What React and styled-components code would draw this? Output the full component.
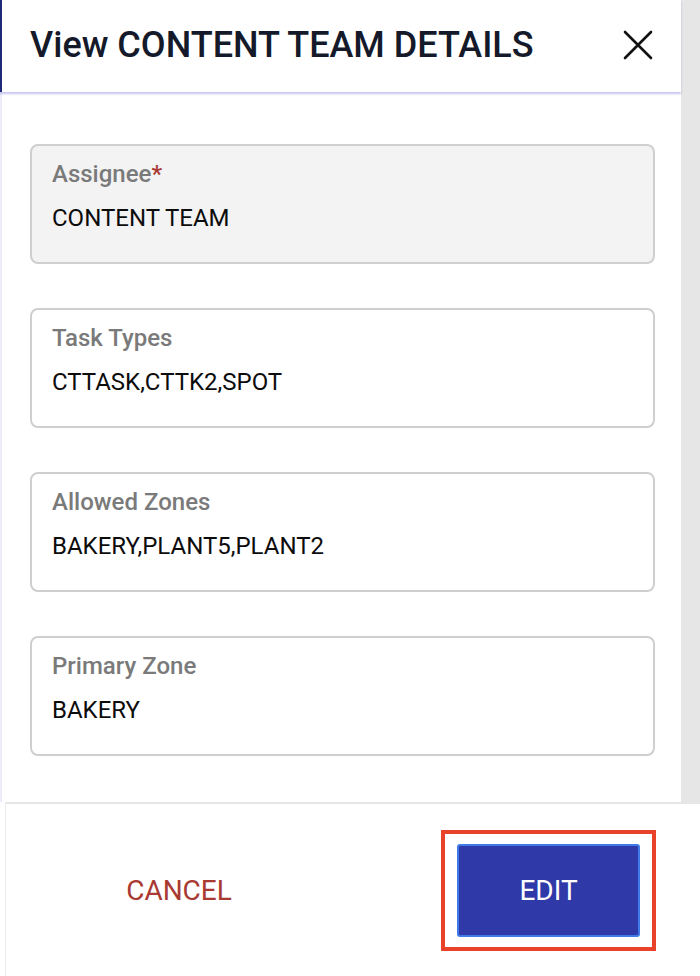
import React from 'react';
import styled, { createGlobalStyle } from 'styled-components';

const GlobalStyle = createGlobalStyle`
  html, body {
    margin: 0;
    padding: 0;
    background: #ffffff;
    font-family: Roboto, 'Noto Sans', Arial, sans-serif;
  }
`;

const Page = styled.div`
  width: 700px;
  height: 976px;
  display: flex;
  flex-direction: column;
  overflow: hidden;
  background: #ffffff;
`;

const Top = styled.div`
  flex: 1;
  display: flex;
  min-height: 0;
`;

const Panel = styled.div`
  flex: 1;
  display: flex;
  flex-direction: column;
  border-left: 2px solid #ececfb;
`;

const Gutter = styled.div`
  width: 19px;
  background: #e6e6e6;
`;

const Header = styled.div`
  height: 92px;
  display: flex;
  align-items: center;
  justify-content: space-between;
  padding: 0 26px 2px 28px;
  margin-left: -2px;
  border-left: 2px solid #1f2a7a;
  box-shadow: 0 2px 2px rgba(90, 90, 210, 0.35);
  box-sizing: border-box;
  position: relative;
`;

const Title = styled.h1`
  margin: 0;
  font-size: 36px;
  font-weight: 500;
  color: #141a2a;
  letter-spacing: 0;
`;

const CloseButton = styled.button`
  border: none;
  background: none;
  padding: 0;
  width: 34px;
  height: 34px;
  display: flex;
  align-items: center;
  justify-content: center;
  cursor: pointer;
`;

const Body = styled.div`
  flex: 1;
  display: flex;
  flex-direction: column;
  gap: 44px;
  padding: 52px 26px 0 28px;
`;

const Field = styled.div`
  height: 120px;
  box-sizing: border-box;
  border: 2px solid #cfcfcf;
  border-radius: 8px;
  background: ${p => (p.$disabled ? '#f3f3f3' : '#ffffff')};
  padding: 14px 20px 0;
  display: flex;
  flex-direction: column;
  gap: 16px;
`;

const Label = styled.div`
  font-size: 24px;
  font-weight: 500;
  color: #7a7a7a;
  line-height: 28px;
`;

const Required = styled.span`
  color: #a83a33;
`;

const Value = styled.div`
  font-size: 24px;
  color: #0c0c0c;
  line-height: 28px;
`;

const Footer = styled.div`
  height: 174px;
  margin-left: 5px;
  border-top: 2px solid #e6e6e6;
  border-left: 1px solid #ededed;
  display: flex;
  align-items: center;
  justify-content: space-between;
  padding: 0 44px 0 58px;
  box-sizing: border-box;
`;

const CancelButton = styled.button`
  border: none;
  background: none;
  width: 230px;
  height: 60px;
  font-family: Roboto, 'Noto Sans', Arial, sans-serif;
  font-size: 28px;
  color: #a83a33;
  cursor: pointer;
`;

const Highlight = styled.div`
  border: 4px solid #e8432a;
  padding: 10px 12px;
`;

const EditButton = styled.button`
  display: block;
  width: 183px;
  height: 93px;
  background: #3039a8;
  border: 2px solid #3e7ae8;
  border-radius: 3px;
  color: #ffffff;
  font-family: Roboto, 'Noto Sans', Arial, sans-serif;
  font-size: 28px;
  cursor: pointer;
`;

const fields = [
  { label: 'Assignee', value: 'CONTENT TEAM', required: true, disabled: true },
  { label: 'Task Types', value: 'CTTASK,CTTK2,SPOT' },
  { label: 'Allowed Zones', value: 'BAKERY,PLANT5,PLANT2' },
  { label: 'Primary Zone', value: 'BAKERY' },
];

export default function App() {
  return (
    <>
      <GlobalStyle />
      <Page>
        <Top>
          <Panel>
            <Header>
              <Title>View CONTENT TEAM DETAILS</Title>
              <CloseButton aria-label="Close">
                <svg width="32" height="32" viewBox="0 0 32 32">
                  <path d="M3 3 L29 29 M29 3 L3 29" stroke="#111" strokeWidth="2.6" strokeLinecap="round" />
                </svg>
              </CloseButton>
            </Header>
            <Body>
              {fields.map(f => (
                <Field key={f.label} $disabled={f.disabled}>
                  <Label>
                    {f.label}
                    {f.required && <Required>*</Required>}
                  </Label>
                  <Value>{f.value}</Value>
                </Field>
              ))}
            </Body>
          </Panel>
          <Gutter />
        </Top>
        <Footer>
          <CancelButton>CANCEL</CancelButton>
          <Highlight>
            <EditButton>EDIT</EditButton>
          </Highlight>
        </Footer>
      </Page>
    </>
  );
}
